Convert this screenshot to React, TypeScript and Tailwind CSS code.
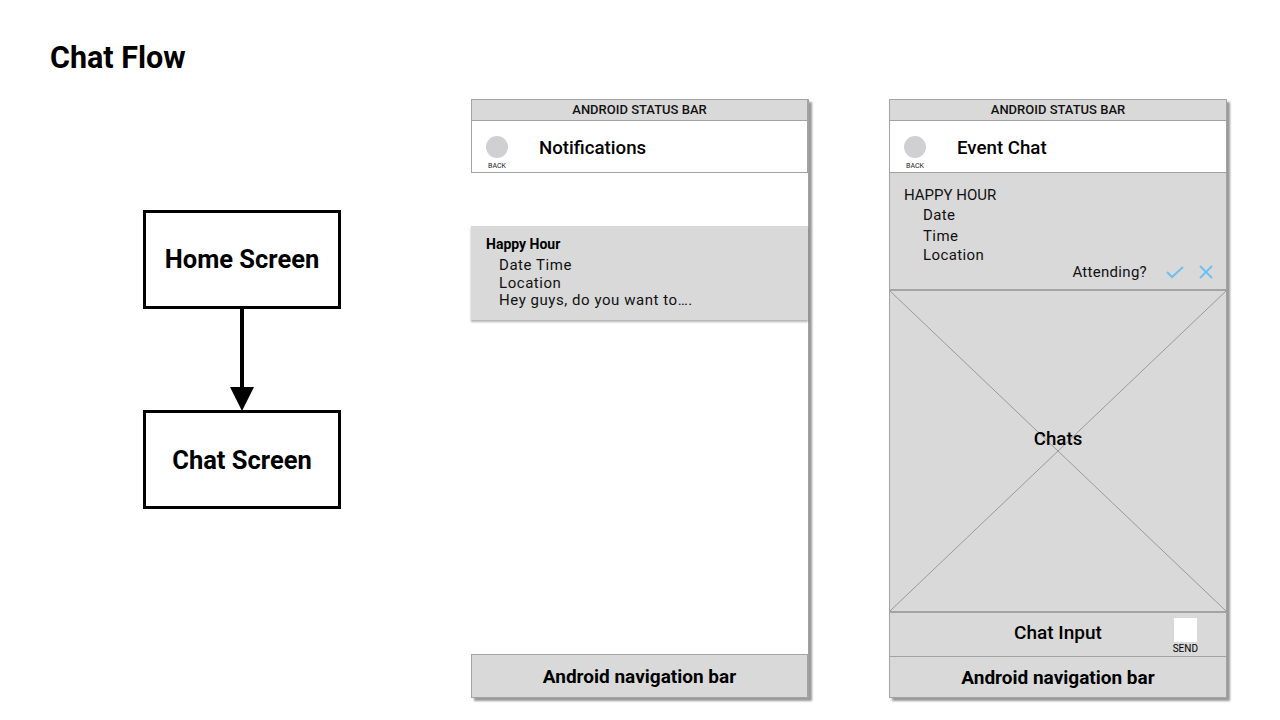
const font = { fontFamily: "Roboto, 'Liberation Sans', sans-serif" };

const StatusBar = () => (
  <div className="h-[22px] flex-none bg-[#d9d9d9] border border-[#a3a3a3] flex items-center justify-center text-[13px] font-medium text-[#111]">
    ANDROID STATUS BAR
  </div>
);

const Header = ({ title }: { title: string }) => (
  <div className="h-[52px] flex-none bg-white border border-t-0 border-[#a3a3a3] flex items-center">
    <div className="w-[50px] flex flex-col items-center pt-[12px]">
      <div className="w-[22px] h-[22px] rounded-full bg-[#d0d0d2]" />
      <span className="text-[7px] leading-[8px] mt-[4px] text-[#222]">BACK</span>
    </div>
    <span className="ml-[17px] mt-[3px] text-[18.7px] font-medium text-black">{title}</span>
  </div>
);

const NavBar = ({ h }: { h: string }) => (
  <div className={`${h} flex-none bg-[#d9d9d9] border border-[#a3a3a3] flex items-center justify-center text-[19px] font-bold text-black`}>
    <span className="mt-[3px]">Android navigation bar</span>
  </div>
);

export default function App() {
  return (
    <div className="w-[1280px] h-[720px] bg-white relative overflow-hidden text-black" style={font}>
      <h1 className="pt-[40px] pl-[50px] text-[30.5px] leading-[36px] font-bold">Chat Flow</h1>

      <div className="flex items-start mt-[23px]">
        {/* flow chart */}
        <div className="ml-[143px] mt-[111px] w-[198px] flex flex-col items-center">
          <div className="w-[198px] h-[99px] border-[3px] border-black flex items-center justify-center text-[25.5px] font-bold">
            Home Screen
          </div>
          <svg width="30" height="103" viewBox="0 0 30 103" className="-my-[1px]">
            <line x1="15" y1="0" x2="15" y2="80" stroke="black" strokeWidth="4" />
            <polygon points="3,79 27,79 15,103" fill="black" />
          </svg>
          <div className="w-[198px] h-[99px] border-[3px] border-black flex items-center justify-center text-[25.5px] font-bold">
            <span className="mt-[1px]">Chat Screen</span>
          </div>
        </div>

        {/* notifications screen */}
        <div className="ml-[130px] w-[338px] h-[599px] bg-white flex flex-col shadow-[3px_3px_2px_rgba(0,0,0,0.4)] border-r border-[#a3a3a3]">
          <StatusBar />
          <Header title="Notifications" />
          <div className="h-[53px] flex-none" />
          <div className="h-[94px] flex-none bg-[#d9d9d9] shadow-[0_2px_2px_rgba(0,0,0,0.3)] pl-[15px] pt-[9px]">
            <div className="text-[14px] leading-[18px] font-bold">Happy Hour</div>
            <div className="pl-[13px] mt-[4px] text-[15px] leading-[17.5px] tracking-[0.55px] text-[#111]">
              <div>Date Time</div>
              <div>Location</div>
              <div>Hey guys, do you want to….</div>
            </div>
          </div>
          <div className="flex-1" />
          <NavBar h="h-[44px]" />
        </div>

        {/* event chat screen */}
        <div className="ml-[80px] w-[338px] h-[599px] bg-[#d9d9d9] flex flex-col shadow-[3px_3px_2px_rgba(0,0,0,0.4)]">
          <StatusBar />
          <Header title="Event Chat" />
          <div className="h-[118px] flex-none border-x border-b-2 border-[#a3a3a3] pl-[14px] pt-[12px] text-[15px] text-[#111]">
            <div className="leading-[20px]">HAPPY HOUR</div>
            <div className="pl-[19px] leading-[20px] tracking-[0.4px]">
              <div>Date</div>
              <div className="mt-[1px]">Time</div>
              <div className="-mt-[1px]">Location</div>
            </div>
            <div className="flex items-center justify-end pr-[13px] -mt-[3px] leading-[20px] tracking-[0.3px]">
              <span>Attending?</span>
              <svg width="18" height="14" viewBox="0 0 18 14" className="ml-[19px]">
                <polyline points="1,7 6,12 17,2" fill="none" stroke="#6ec0f0" strokeWidth="2" />
              </svg>
              <svg width="14" height="14" viewBox="0 0 14 14" className="ml-[15px]">
                <line x1="1" y1="1" x2="13" y2="13" stroke="#6ec0f0" strokeWidth="2" />
                <line x1="13" y1="1" x2="1" y2="13" stroke="#6ec0f0" strokeWidth="2" />
              </svg>
            </div>
          </div>
          <div className="h-[322px] flex-none border-x border-b-2 border-[#a3a3a3] relative flex items-center justify-center">
            <svg className="absolute inset-0 w-full h-full" preserveAspectRatio="none" viewBox="0 0 100 100">
              <line x1="0" y1="0" x2="100" y2="100" stroke="#9a9a9a" strokeWidth="1" vectorEffect="non-scaling-stroke" />
              <line x1="100" y1="0" x2="0" y2="100" stroke="#9a9a9a" strokeWidth="1" vectorEffect="non-scaling-stroke" />
            </svg>
            <span className="relative text-[18.7px] font-medium mb-[24px]">Chats</span>
          </div>
          <div className="h-[44px] flex-none border-x border-b border-[#a3a3a3] relative flex items-center justify-center">
            <span className="text-[19px] font-medium -mt-[2px]">Chat Input</span>
            <div className="absolute right-[28px] top-[5px] flex flex-col items-center">
              <div className="w-[23px] h-[24px] bg-white" />
              <span className="text-[10px] leading-[12px] mt-[1px]">SEND</span>
            </div>
          </div>
          <NavBar h="h-[41px] border-t-0" />
        </div>
      </div>
    </div>
  );
}
